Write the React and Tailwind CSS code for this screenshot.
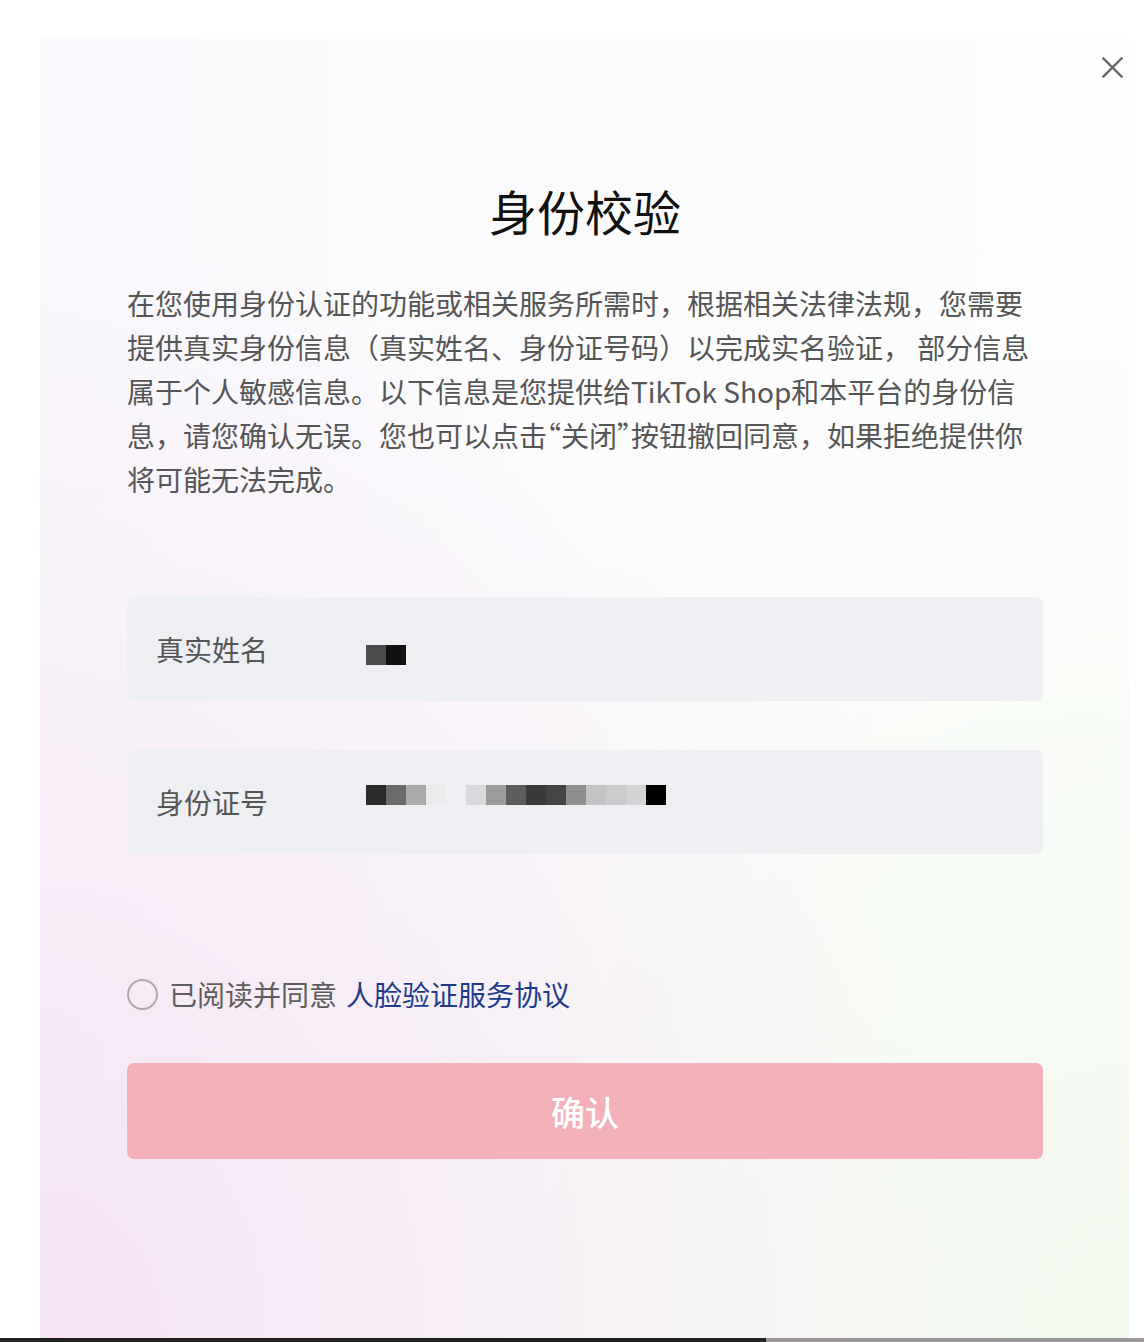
import { useState } from "react";

const FONT = "font-['Noto_Sans_CJK_SC','Noto_Sans',sans-serif]";

// pixelated masks shown in place of the real values
const NAME_BLOCKS = ["#4b4b4d", "#111111"];
const ID_BLOCKS = [
  "#2a2c2b", "#6b6b6b", "#aaaaaa", "#ebebed", null,
  "#d9dadd", "#9c9c9c", "#5c5d5f", "#3a3a3a", "#444444",
  "#8f8f8f", "#c2c3c5", "#cbcbcd", "#d3d4d6", "#000000",
];

function Masked({ blocks }) {
  return (
    <div className="flex">
      {blocks.map((c, i) => (
        <span
          key={i}
          className="w-[20px] h-[20px] block"
          style={{ background: c || "transparent" }}
        />
      ))}
    </div>
  );
}

function Field({ label, children, valueClass }) {
  return (
    <div className="flex items-center h-[104px] rounded-[8px] bg-[#eeeff3] pl-[29px]">
      <span className="w-[210px] text-[28px] leading-none text-[#555]">{label}</span>
      <div className={valueClass}>{children}</div>
    </div>
  );
}

export default function App() {
  const [agreed, setAgreed] = useState(false);

  return (
    <div className={`w-full h-[1342px] bg-white flex flex-col ${FONT}`}>
      <div className="relative ml-[40px] mt-[39px] w-[1089px] flex-1 bg-[radial-gradient(ellipse_at_0%_100%,#f5e3f3_0%,rgba(250,246,250,0)_60%),radial-gradient(ellipse_at_100%_100%,#f2f9ee_0%,rgba(246,250,244,0)_55%),linear-gradient(90deg,#f9f8fc_0%,#fbfbfc_50%,#fcfdfc_100%)]">
        <button
          aria-label="Close"
          className="absolute top-[18px] right-[6px] w-[21px] h-[21px] text-[#666]"
        >
          <svg viewBox="0 0 21 21" width="21" height="21" fill="none" stroke="currentColor" strokeWidth="2.4" strokeLinecap="square">
            <path d="M1.5 1.5 L19.5 19.5 M19.5 1.5 L1.5 19.5" />
          </svg>
        </button>

        <div className="pl-[87px] w-[1003px] pt-[139px]">
          <h1 className="text-center text-[48px] leading-[64px] font-normal text-[#111]">身份校验</h1>

          <p className="mt-[39px] text-[28px] leading-[44px] text-[#555]">
            在您使用身份认证的功能或相关服务所需时，根据相关法律法规，您需要提供真实身份信息（真实姓名、身份证号码）以完成实名验证， 部分信息属于个人敏感信息。以下信息是您提供给TikTok Shop和本平台的身份信息，请您确认无误。您也可以点击<span className="[font-feature-settings:'halt']">“关闭”</span>按钮撤回同意，如果拒绝提供你将可能无法完成。
          </p>

          <div className="mt-[96px] flex flex-col gap-[49px]">
            <Field label="真实姓名" valueClass="mt-[12px]">
              <Masked blocks={NAME_BLOCKS} />
            </Field>
            <Field label="身份证号" valueClass="mb-[14px]">
              <Masked blocks={ID_BLOCKS} />
            </Field>
          </div>

          <label className="mt-[124px] flex items-center h-[32px] cursor-pointer">
            <span
              onClick={() => setAgreed(!agreed)}
              className={`w-[31px] h-[31px] rounded-full border-2 ${agreed ? "border-[#f3b0b9] bg-[#f3b0b9]" : "border-[#ababab]"}`}
            />
            <span className="ml-[11px] text-[28px] leading-none text-[#5c5c5c]">已阅读并同意</span>
            <span className="ml-[9px] text-[28px] leading-none text-[#1c3b8c]">人脸验证服务协议</span>
          </label>

          <button className="mt-[53px] w-full h-[96px] rounded-[7px] bg-[#f3b0b9] text-white text-[34px] font-medium">
            确认
          </button>
        </div>
      </div>
      <div className="flex h-[4px]">
        <div className="w-[766px] bg-[#222]" />
        <div className="flex-1 bg-[#9b969a]" />
      </div>
    </div>
  );
}
